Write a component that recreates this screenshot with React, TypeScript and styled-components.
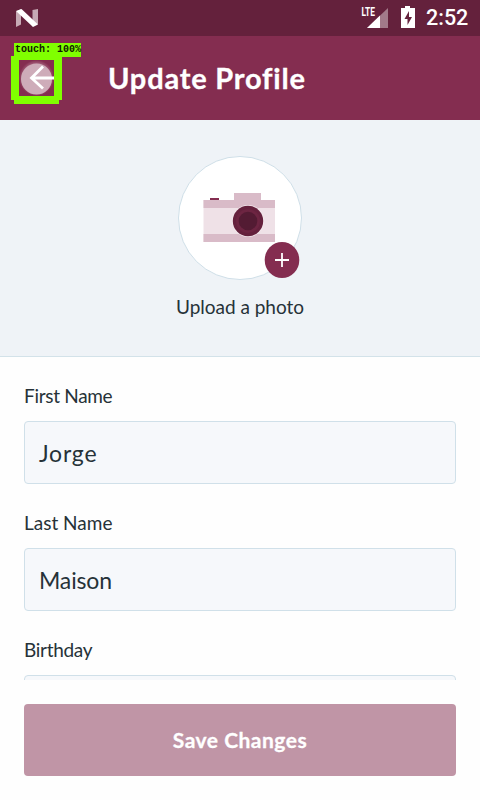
import React from 'react';
import styled, { createGlobalStyle } from 'styled-components';

const GlobalStyle = createGlobalStyle`
  * { box-sizing: border-box; }
  body { margin: 0; background: #fefefe; }
`;

const Screen = styled.div`
  width: 480px;
  height: 800px;
  display: flex;
  flex-direction: column;
  overflow: hidden;
  background: #fefefe;
  color: #263238;
  font-family: Lato, 'Open Sans', sans-serif;
`;

const StatusBar = styled.div`
  height: 36px;
  flex: none;
  display: flex;
  align-items: center;
  padding: 0 11px 0 15px;
  background: #64213c;
  color: #fff;
`;

const StatusIcons = styled.svg`
  margin-left: auto;
`;

const Clock = styled.span`
  width: 43px;
  margin-left: 9px;
  font: 500 21.5px/38px Roboto, sans-serif;
  white-space: nowrap;
`;

const AppBar = styled.header`
  position: relative;
  height: 84px;
  flex: none;
  display: flex;
  align-items: center;
  padding-left: 108px;
  background: #842d50;
`;

const Title = styled.h1`
  margin: 0;
  color: #fff;
  font-size: 29px;
  line-height: 36px;
  font-weight: 700;
  letter-spacing: 0.8px;
  -webkit-text-stroke: 0.3px #fff;
  white-space: nowrap;
`;

const TouchMarker = styled.div`
  position: absolute;
  left: 11px;
  top: 7px;
  width: 70px;
  height: 61px;
`;

const TouchLabel = styled.div`
  position: absolute;
  left: 3px;
  top: 0;
  width: 67px;
  height: 14px;
  padding-left: 1px;
  background: #80ff00;
  color: #102000;
  font: 700 10px/13px 'Liberation Mono', monospace;
  white-space: nowrap;
`;

const TouchArt = styled.svg`
  display: block;
`;

const PhotoPanel = styled.section`
  height: 237px;
  flex: none;
  display: flex;
  flex-direction: column;
  align-items: center;
  padding-top: 36px;
  background: #eff3f7;
  border-bottom: 1px solid #d3e2e9;
`;

const PhotoArt = styled.svg`
  display: block;
  flex: none;
`;

const PhotoCaption = styled.div`
  margin-top: 15px;
  font-size: 19px;
  line-height: 24px;
  letter-spacing: -0.02px;
`;

const Form = styled.main`
  height: 323px;
  flex: none;
  overflow: hidden;
  padding: 27px 24px 0;
`;

const Field = styled.div`
  height: 127px;
`;

const Label = styled.div<{ $spacing: number }>`
  height: 37px;
  font-size: 19px;
  line-height: 24px;
  letter-spacing: ${(p) => p.$spacing}px;
`;

const Input = styled.div<{ $spacing: number }>`
  height: 63px;
  padding-left: 14px;
  border: 1px solid #d0e0e9;
  border-radius: 4px;
  background: #f6f8fb;
  font-size: 23px;
  line-height: 62px;
  letter-spacing: ${(p) => p.$spacing}px;
`;

const Footer = styled.footer`
  padding: 24px;
`;

const SaveButton = styled.button`
  display: block;
  width: 432px;
  height: 72px;
  padding: 0;
  border: 0;
  border-radius: 4px;
  background: #c095a6;
  color: #fff;
  font: 700 21px/72px Lato, sans-serif;
  letter-spacing: 0.5px;
  -webkit-text-stroke: 0.3px #fff;
`;

const fields = [
  { label: 'First Name', value: 'Jorge', labelSpacing: -0.3, valueSpacing: 0.8 },
  { label: 'Last Name', value: 'Maison', labelSpacing: 0, valueSpacing: -0.15 },
  { label: 'Birthday', value: '', labelSpacing: -0.3, valueSpacing: 0 },
];

export default function App() {
  return (
    <>
      <GlobalStyle />
      <Screen>
        <StatusBar>
          <svg width="24" height="36" viewBox="15 0 24 36">
            <path d="M16 11.5 21 9v15.5L16 27ZM32.500 10 38 9v15l-5.500 2.500Z" fill="#c6aab5" />
            <path d="M16 11 21.500 9 38 24.500 33 27Z" fill="#fff" />
          </svg>
          <StatusIcons width="56" height="36" viewBox="361 0 56 36">
            <path d="M388 8v20h-21Z" fill="#a27a8a" />
            <path d="M380 15.500V28h-13Z" fill="#fff" />
            <path d="M361 5h14.500v12H361z" fill="#64213c" />
            <text x="361.500" y="16" fill="#fff" fontFamily="Roboto" fontWeight="700" fontSize="12" textLength="13.500" lengthAdjust="spacingAndGlyphs">LTE</text>
            <path d="M405 6h5v2h5v20h-14V8h4Z" fill="#fff" />
            <path d="m409 11-4.500 8h3v6l4.500-8h-3Z" fill="#64213c" />
          </StatusIcons>
          <Clock>2:52</Clock>
        </StatusBar>
        <AppBar>
          <TouchMarker>
            <TouchArt width="70" height="61" viewBox="11 43 70 61">
              <defs>
                <radialGradient id="halo">
                  <stop offset="0.65" stopColor="#b77e95" />
                  <stop offset="1" stopColor="#842d50" />
                </radialGradient>
              </defs>
              <path d="M19 60h35v36H19z" fill="url(#halo)" />
              <circle cx="36.500" cy="79" r="15.500" fill="#ceacb9" />
              <path d="M54 78H32M43 66.500 31.500 78 43 88.500" fill="none" stroke="#fff" strokeWidth="2.800" />
              <path fillRule="evenodd" d="M11 56h51v44h-3v4H14v-4h-3ZM19 60v36h35V60Z" fill="#80ff00" />
            </TouchArt>
            <TouchLabel>touch: 100%</TouchLabel>
          </TouchMarker>
          <Title>Update Profile</Title>
        </AppBar>
        <PhotoPanel>
          <PhotoArt width="124" height="124" viewBox="178 156 124 124">
            <circle cx="240" cy="218" r="61.500" fill="#fff" stroke="#cfdfe8" />
            <path d="M203.500 200H275v42h-71.500z" fill="#efe1e7" />
            <path d="M203.500 200H234v-7h27v7h14v8h-71.500zM203.500 234H275v8h-71.500z" fill="#d9bbc8" />
            <path d="M210 198h9v2h-9z" fill="#842d50" />
            <circle cx="248" cy="221" r="16" fill="#f3e8ed" />
            <circle cx="248" cy="221" r="15.200" fill="#65213d" />
            <circle cx="248" cy="221" r="12" fill="#6d2542" />
            <circle cx="248" cy="221" r="9.300" fill="#531b33" />
            <ellipse cx="282" cy="260" rx="17.300" ry="18" fill="#842d50" />
            <path d="M275 260h14M282 253v14" stroke="#fff" strokeWidth="1.800" />
          </PhotoArt>
          <PhotoCaption>Upload a photo</PhotoCaption>
        </PhotoPanel>
        <Form>
          {fields.map((f) => (
            <Field key={f.label}>
              <Label $spacing={f.labelSpacing}>{f.label}</Label>
              <Input $spacing={f.valueSpacing}>{f.value}</Input>
            </Field>
          ))}
        </Form>
        <Footer>
          <SaveButton>Save Changes</SaveButton>
        </Footer>
      </Screen>
    </>
  );
}
